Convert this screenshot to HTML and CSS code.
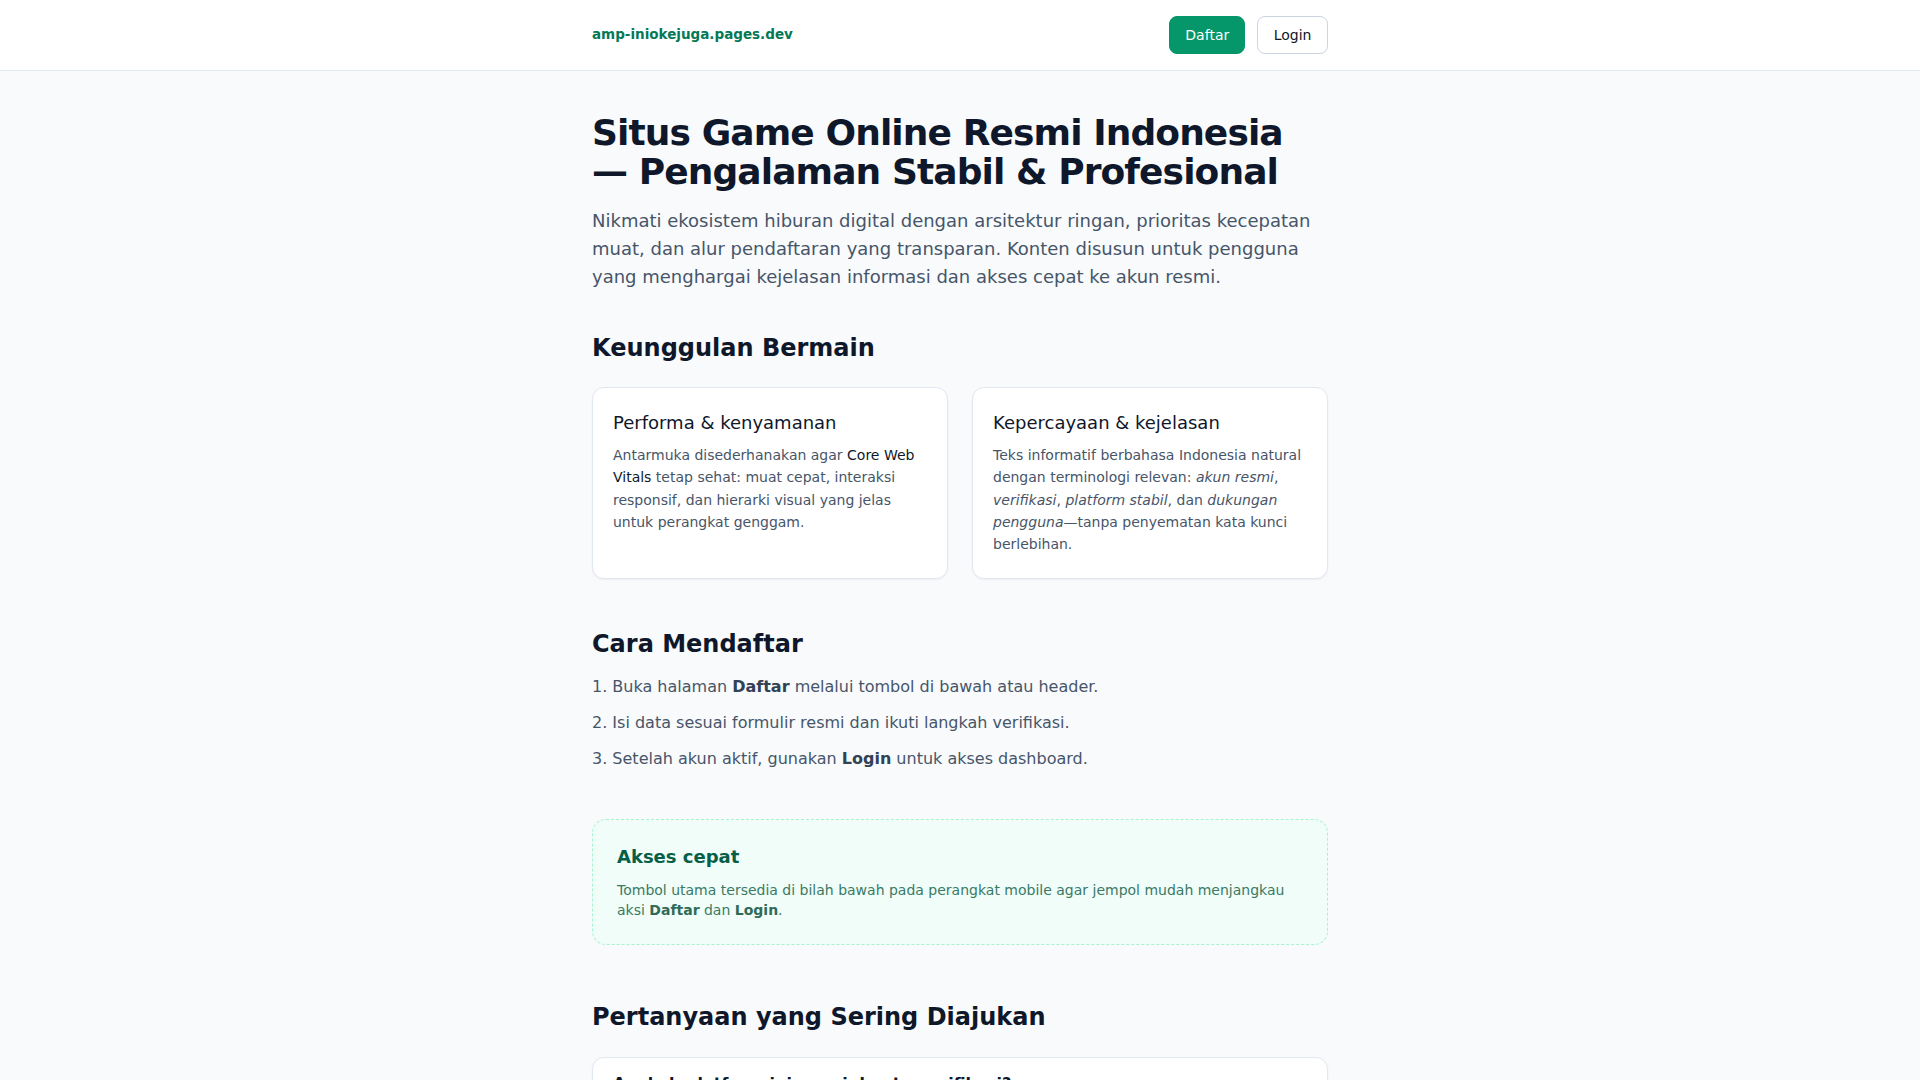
FILE: index.html
```html
<!DOCTYPE html>
<html lang="id">
<head>
<meta charset="utf-8">
<title>amp-iniokejuga.pages.dev</title>
<link rel="stylesheet" href="styles.css">
</head>
<body>
<header class="site-header">
  <div class="wrap header-row">
    <a class="logo" href="#">amp-iniokejuga.pages.dev</a>
    <nav class="actions">
      <a class="btn btn-primary" href="#">Daftar</a>
      <a class="btn btn-outline" href="#">Login</a>
    </nav>
  </div>
</header>
<main class="wrap main">
  <section class="hero">
    <h1>Situs Game Online Resmi Indonesia — Pengalaman Stabil &amp; Profesional</h1>
    <p class="lead">Nikmati ekosistem hiburan digital dengan arsitektur ringan, prioritas kecepatan muat, dan alur pendaftaran yang transparan. Konten disusun untuk pengguna yang menghargai kejelasan informasi dan akses cepat ke akun resmi.</p>
  </section>

  <section class="sec sec-features">
    <h2>Keunggulan Bermain</h2>
    <div class="grid">
      <article class="card">
        <h3>Performa &amp; kenyamanan</h3>
        <p>Antarmuka disederhanakan agar <span class="hl">Core Web Vitals</span> tetap sehat: muat cepat, interaksi responsif, dan hierarki visual yang jelas untuk perangkat genggam.</p>
      </article>
      <article class="card">
        <h3>Kepercayaan &amp; kejelasan</h3>
        <p>Teks informatif berbahasa Indonesia natural dengan terminologi relevan: <em>akun resmi</em>, <em>verifikasi</em>, <em>platform stabil</em>, dan <em>dukungan pengguna</em>—tanpa penyematan kata kunci berlebihan.</p>
      </article>
    </div>
  </section>

  <section class="sec sec-steps">
    <h2>Cara Mendaftar</h2>
    <ol class="steps">
      <li>Buka halaman <strong>Daftar</strong> melalui tombol di bawah atau header.</li>
      <li>Isi data sesuai formulir resmi dan ikuti langkah verifikasi.</li>
      <li>Setelah akun aktif, gunakan <strong>Login</strong> untuk akses dashboard.</li>
    </ol>
  </section>

  <aside class="notice">
    <h3>Akses cepat</h3>
    <p>Tombol utama tersedia di bilah bawah pada perangkat mobile agar jempol mudah menjangkau aksi <strong>Daftar</strong> dan <strong>Login</strong>.</p>
  </aside>

  <section class="sec sec-faq">
    <h2>Pertanyaan yang Sering Diajukan</h2>
    <div class="faq">
      <div class="faq-item">
        <h3>Apakah platform ini resmi dan terverifikasi?</h3>
        <p>Ya. Informasi akun, pendaftaran, dan akses login disediakan melalui kanal resmi dengan proses verifikasi yang jelas.</p>
      </div>
    </div>
  </section>
</main>
</body>
</html>
```

FILE: styles.css
```css
* { box-sizing: border-box; }

html, body {
  margin: 0;
  padding: 0;
}

body {
  background: #f8fafc;
  color: #0f172a;
  font-family: "DejaVu Sans", "Noto Sans", sans-serif;
  font-size: 16px;
  line-height: 1.6;
}

a { text-decoration: none; }

.wrap {
  max-width: 736px;
  margin: 0 auto;
}

.site-header {
  background: #ffffff;
  border-bottom: 1px solid #e2e8f0;
}

.header-row {
  display: flex;
  align-items: center;
  justify-content: space-between;
  height: 70px;
}

.logo {
  color: #047857;
  font-weight: 700;
  font-size: 13.5px;
}

.actions {
  display: flex;
  gap: 12px;
}

.btn {
  display: inline-block;
  font-size: 14px;
  line-height: 22px;
  padding: 7px 15px;
  border-radius: 8px;
  border: 1px solid transparent;
}

.btn-primary {
  background: #059669;
  border-color: #059669;
  color: #ffffff;
}

.btn-outline {
  background: #ffffff;
  border-color: #cbd5e1;
  color: #0f172a;
  padding-left: 15.5px;
  padding-right: 15.5px;
}

.main {
  padding-top: 41.5px;
  padding-bottom: 40px;
}

h1 {
  margin: 0;
  font-size: 36px;
  line-height: 1.1;
  letter-spacing: -0.025em;
  font-weight: 700;
  color: #0f172a;
}

.lead {
  margin: 15.2px 0 0;
  font-size: 18px;
  line-height: 1.55;
  color: #475569;
}

h2 {
  margin: 0;
  font-size: 24px;
  line-height: 1.3;
  font-weight: 700;
  color: #0f172a;
}

.sec-features { margin-top: 42px; }
.sec-features h2 { margin-bottom: 23.5px; }

.grid {
  display: grid;
  grid-template-columns: 1fr 1fr;
  gap: 24px;
}

.card {
  background: #ffffff;
  border: 1px solid #e2e8f0;
  border-radius: 12px;
  padding: 21.5px 20px 22.5px;
  box-shadow: 0 1px 2px rgba(15, 23, 42, 0.05);
}

.card h3 {
  margin: 0 0 9px;
  font-size: 18px;
  line-height: 1.4;
  font-weight: 400;
  color: #0f172a;
}

.card p {
  margin: 0;
  font-size: 14px;
  line-height: 1.6;
  color: #475569;
}

.card .hl { color: #0f172a; }

.sec-steps { margin-top: 50px; }
.sec-steps h2 { margin-bottom: 13.5px; }

.steps {
  margin: 0;
  padding: 0;
  list-style-position: inside;
  color: #475569;
}

.steps li {
  font-size: 16px;
  line-height: 1.6;
}

.steps li + li { margin-top: 10.4px; }

.steps strong { color: #334155; }

.notice {
  margin-top: 47px;
  background: #f0fdf8;
  border: 1px dashed #a7f3d0;
  border-radius: 14px;
  padding: 23.6px 24px 23px;
}

.notice h3 {
  margin: 0 0 7.6px;
  font-size: 18px;
  line-height: 1.6;
  font-weight: 700;
  color: #065f46;
}

.notice p {
  margin: 0;
  font-size: 14px;
  line-height: 20.5px;
  color: #3a7a65;
}

.notice strong { color: #2f6b57; }

.sec-faq { margin-top: 57.6px; }
.sec-faq h2 { margin-bottom: 23.2px; }

.faq-item {
  background: #ffffff;
  border: 1px solid #e2e8f0;
  border-radius: 12px;
  padding: 13px 20px 16px;
  box-shadow: 0 1px 2px rgba(15, 23, 42, 0.05);
}

.faq-item h3 {
  margin: 0 0 8px;
  font-size: 16px;
  line-height: 1.6;
  font-weight: 600;
  color: #0f172a;
}

.faq-item p {
  margin: 0;
  font-size: 14px;
  color: #475569;
}
```
